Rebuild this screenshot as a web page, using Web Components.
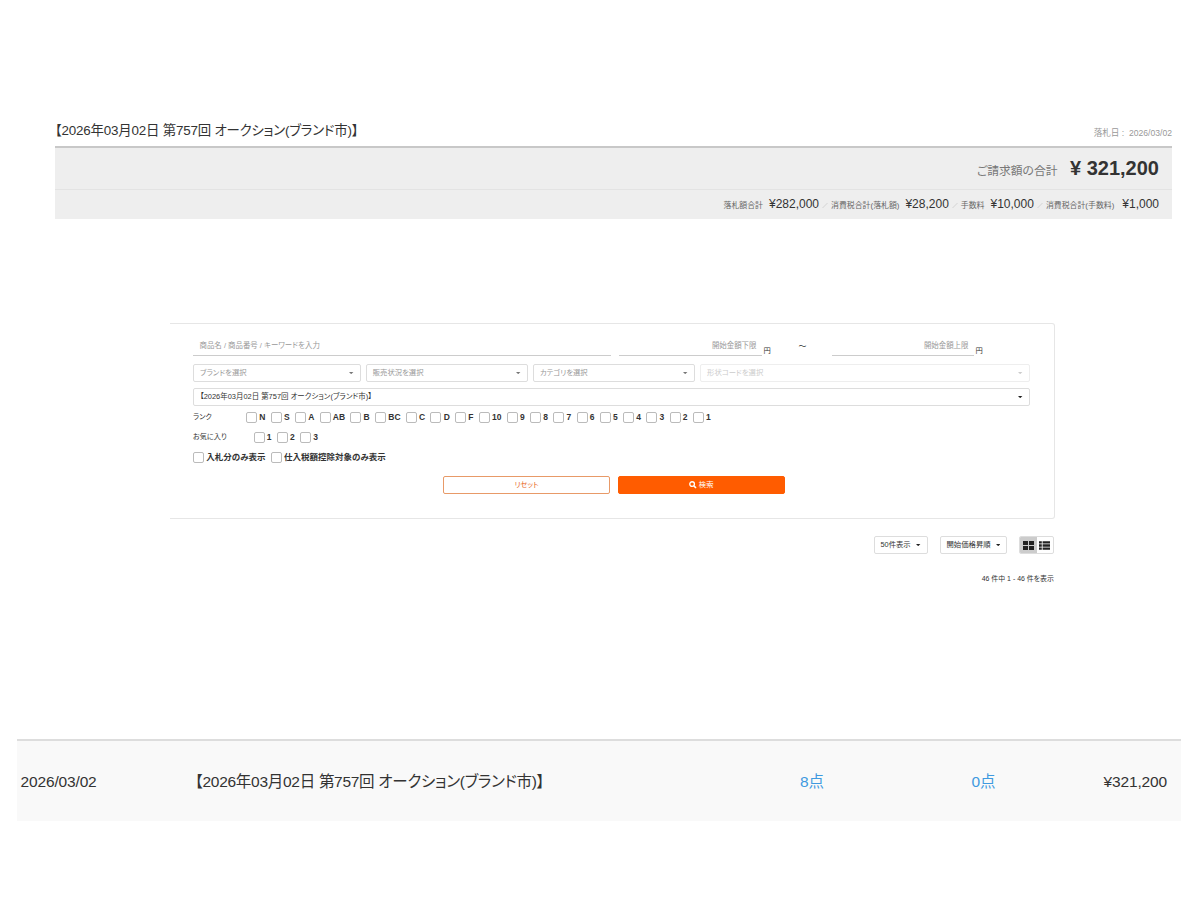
<!DOCTYPE html>
<html lang="ja">
<head>
<meta charset="utf-8">
<title>オークション</title>
<style>
  body {
    margin: 0;
    background: #fff;
    color: #333;
    font-family: "Liberation Sans", "Noto Sans CJK JP", sans-serif;
    font-feature-settings: "palt";
    line-height: 1;
  }
</style>
</head>
<body>
<auction-page></auction-page>

<script>
const define = (name, html, setup) => {
  const template = document.createElement("template");
  template.innerHTML = `<style>* { box-sizing: border-box; }</style>${html}`;
  customElements.define(name, class extends HTMLElement {
    constructor() {
      super();
      this.attachShadow({ mode: "open" });
      this.shadowRoot.appendChild(template.content.cloneNode(true));
    }
    connectedCallback() {
      if (setup) setup(this, this.shadowRoot);
    }
  });
};

// Label + amount pair in the breakdown line
define("price-item", `
  <style>
    :host { display: flex; align-items: baseline; white-space: nowrap; }
    .label { font-size: 7.9px; color: #666; margin-right: var(--gap, 6px); }
    .price { font-size: 12px; color: #333; }
  </style>
  <span class="label"><slot name="label"></slot></span>
  <span class="price"><slot></slot></span>
`);

define("auction-summary", `
  <style>
    :host { display: block; width: 1117px; }
    .head { display: flex; justify-content: space-between; align-items: center; height: 30px; white-space: nowrap; }
    .title { font-size: 13.4px; letter-spacing: -.19px; }
    .date { font-size: 8.6px; color: #999; padding-top: 5px; white-space: pre; }
    .box { background: #eee; border-top: 2px solid #c8c8c8; }
    .total, .detail { display: flex; justify-content: flex-end; padding-right: 13px; }
    .total { height: 42px; align-items: baseline; border-bottom: 1px solid #e3e3e3; padding-top: 10px; }
    .total span { font-size: 11.8px; color: #777; margin-right: 12.5px; }
    .total b { font-size: 20px; }
    .detail { height: 29px; align-items: center; padding-bottom: 1px; }
    .slash { width: 8px; height: 5px; margin: 3px 2px 0; }
  </style>
  <div class="head">
    <div class="title">【2026年03月02日 第757回 オークション(ブランド市)】</div>
    <div class="date">落札日 :  2026/03/02</div>
  </div>
  <div class="box">
    <div class="total"><span>ご請求額の合計</span><b>¥ 321,200</b></div>
    <div class="detail">
      <price-item><span slot="label">落札額合計</span>¥282,000</price-item>
      <svg class="slash" viewBox="0 0 8 5"><path d="M1.5 5L6.5 0" stroke="#d4d4d4"/></svg>
      <price-item><span slot="label">消費税合計(落札額)</span>¥28,200</price-item>
      <svg class="slash" viewBox="0 0 8 5"><path d="M1.5 5L6.5 0" stroke="#d4d4d4"/></svg>
      <price-item><span slot="label">手数料</span>¥10,000</price-item>
      <svg class="slash" viewBox="0 0 8 5"><path d="M1.5 5L6.5 0" stroke="#d4d4d4"/></svg>
      <price-item style="--gap:8px"><span slot="label">消費税合計(手数料)</span>¥1,000</price-item>
    </div>
  </div>
`);

define("select-box", `
  <style>
    :host { display: flex; align-items: center; justify-content: space-between; box-sizing: border-box; height: 18px;
      padding: 0 6px; border: 1px solid #ddd; border-radius: 2px; font-size: 7.35px; color: #999; white-space: nowrap; }
    :host([filled]) { color: #333; font-size: 7.45px; }
    :host([disabled]) { border-color: #eee; color: #ccc; }
    svg { width: 4.4px; height: 2.2px; flex: none; fill: var(--caret, #777); }
    :host([filled]) svg { fill: #222; }
    :host([disabled]) svg { fill: #ccc; }
  </style>
  <span><slot></slot></span>
  <svg viewBox="0 0 4 2"><path d="M0 0H4L2 2Z"/></svg>
`);

define("line-input", `
  <style>
    :host { display: block; box-sizing: border-box; height: 18px; padding: 4px 5.5px 0 6.5px; border-bottom: 1px solid #ccc;
      font-size: 7.45px; color: #999; white-space: nowrap; }
    :host([right]) { text-align: right; }
  </style>
  <slot></slot>
`);

define("check-box", `
  <style>
    :host { display: flex; align-items: center; font-size: 8.5px; font-weight: bold; margin-right: 5.22px; white-space: nowrap; }
    i { width: 11px; height: 11px; border: 1px solid #bbb; border-radius: 2px; background: #fff; margin-right: 2.3px; }
  </style>
  <i></i><slot></slot>
`);

define("check-group", `
  <style>
    :host { display: flex; align-items: center; height: 20px; }
    .name { font-size: 7.1px; width: var(--name, 53px); padding-top: 2px; }
    .items { display: flex; }
  </style>
  <span class="name"><slot></slot></span>
  <div class="items"></div>
`, (el, root) => {
  root.querySelector(".items").innerHTML = el.getAttribute("items").split(",")
    .map((item) => `<check-box>${item}</check-box>`).join("");
});

define("search-panel", `
  <style>
    :host { display: block; box-sizing: border-box; width: 884.5px; height: 196px; padding: 14px 24px 0 23px;
      border: 1px solid #e6e6e6; border-left: 0; border-radius: 0 3px 3px 0; }
    .row { display: flex; }
    .yen { font-size: 7.3px; width: 8px; margin: 9px 0 0 1.5px; }
    .tilde { font-size: 8px; width: 60px; text-align: center; padding: 5px 0 0 2px; }
    .selects { gap: 5.2px; margin: 8px 0 6px; }
    .checks { margin-top: 1px; }
    .buttons { gap: 7.5px; justify-content: center; margin-top: 9px; padding-left: 5.5px; }
    .btn { display: flex; align-items: center; justify-content: center; gap: 2px; width: 167.3px; height: 18px;
      border: 1px solid #e89a68; border-radius: 2px; font-size: 7.3px; color: #e8641c; }
    .primary { background: #ff5c00; border-color: #ff5c00; color: #fff; }
    .btn svg { width: 7.5px; height: 7.5px; }
  </style>
  <div class="row">
    <line-input style="width:418px">商品名 / 商品番号 / キーワードを入力</line-input>
    <line-input right style="width:143px;margin-left:8px">開始金額下限</line-input>
    <span class="yen">円</span>
    <span class="tilde">～</span>
    <line-input right style="width:142.5px">開始金額上限</line-input>
    <span class="yen">円</span>
  </div>
  <div class="row selects">
    <select-box style="width:167.5px">ブランドを選択</select-box>
    <select-box style="width:162px">販売状況を選択</select-box>
    <select-box style="width:162px">カテゴリを選択</select-box>
    <select-box disabled style="flex:1">形状コードを選択</select-box>
  </div>
  <select-box filled>【2026年03月02日 第757回 オークション(ブランド市)】</select-box>
  <div class="checks">
    <check-group items="N,S,A,AB,B,BC,C,D,F,10,9,8,7,6,5,4,3,2,1">ランク</check-group>
    <check-group items="1,2,3" style="--name:60.5px">お気に入り</check-group>
    <check-group items="入札分のみ表示,仕入税額控除対象のみ表示" style="--name:0px"></check-group>
  </div>
  <div class="row buttons">
    <div class="btn">リセット</div>
    <div class="btn primary">
      <svg viewBox="0 0 16 16" fill="none" stroke="#fff" stroke-width="2.8"><circle cx="6.6" cy="6.6" r="5"/><path d="M10.4 10.4L15 15" stroke-width="3.2"/></svg>
      <span>検索</span>
    </div>
  </div>
`);

define("list-toolbar", `
  <style>
    :host { display: block; width: 884px; }
    .tools { display: flex; justify-content: flex-end; }
    select-box { color: #333; --caret: #222; }
    .view { display: flex; width: 35px; height: 18px; border: 1px solid #ddd; border-radius: 2px; overflow: hidden; }
    .view span { flex: 1; display: flex; align-items: center; justify-content: center; }
    .view .on { background: #ccc; }
    .view svg { width: 11px; height: 9px; fill: #222; }
    .count { font-size: 6.95px; text-align: right; margin-top: 22px; }
  </style>
  <div class="tools">
    <select-box style="width:54px;margin-right:12px">50件表示</select-box>
    <select-box style="width:67.5px;margin-right:12px">開始価格昇順</select-box>
    <div class="view">
      <span class="on"><svg viewBox="0 0 11 9"><path d="M0 0h5v4H0zM6 0h5v4H6zM0 5h5v4H0zM6 5h5v4H6z"/></svg></span>
      <span><svg viewBox="0 0 11 9"><path d="M0 .2h2.8v2.3H0zM3.6 .2H11v2.3H3.6zM0 3.35h2.8v2.3H0zM3.6 3.35H11v2.3H3.6zM0 6.5h2.8v2.3H0zM3.6 6.5H11v2.3H3.6z"/></svg></span>
    </div>
  </div>
  <div class="count">46 件中 1 - 46 件を表示</div>
`);

define("result-row", `
  <style>
    :host { display: grid; grid-template-columns: 174.5px 1fr 171.5px 195.5px; align-items: center; box-sizing: border-box;
      width: 1163.5px; height: 82px; padding: 2px 13.5px 0 3.5px; background: #f9f9f9; border-top: 2px solid #ddd;
      font-size: 15.5px; letter-spacing: -.15px; white-space: nowrap; }
    .name { letter-spacing: -.28px; }
    a { color: #3f9ae0; }
    .last { display: flex; justify-content: space-between; }
  </style>
  <span>2026/03/02</span>
  <span class="name">【2026年03月02日 第757回 オークション(ブランド市)】</span>
  <a>8点</a>
  <div class="last"><a>0点</a><span>¥321,200</span></div>
`);

define("auction-page", `
  <style>
    :host { display: flex; flex-direction: column; height: 900px; overflow: hidden; }
    auction-summary { margin: 116px 0 0 55px; }
    search-panel { margin: 104px 0 0 170px; }
    list-toolbar { margin: 17px 0 0 170px; height: 50px; }
    result-row { margin: 153px 0 0 17px; }
  </style>
  <auction-summary></auction-summary>
  <search-panel></search-panel>
  <list-toolbar></list-toolbar>
  <result-row></result-row>
`);
</script>
</body>
</html>
